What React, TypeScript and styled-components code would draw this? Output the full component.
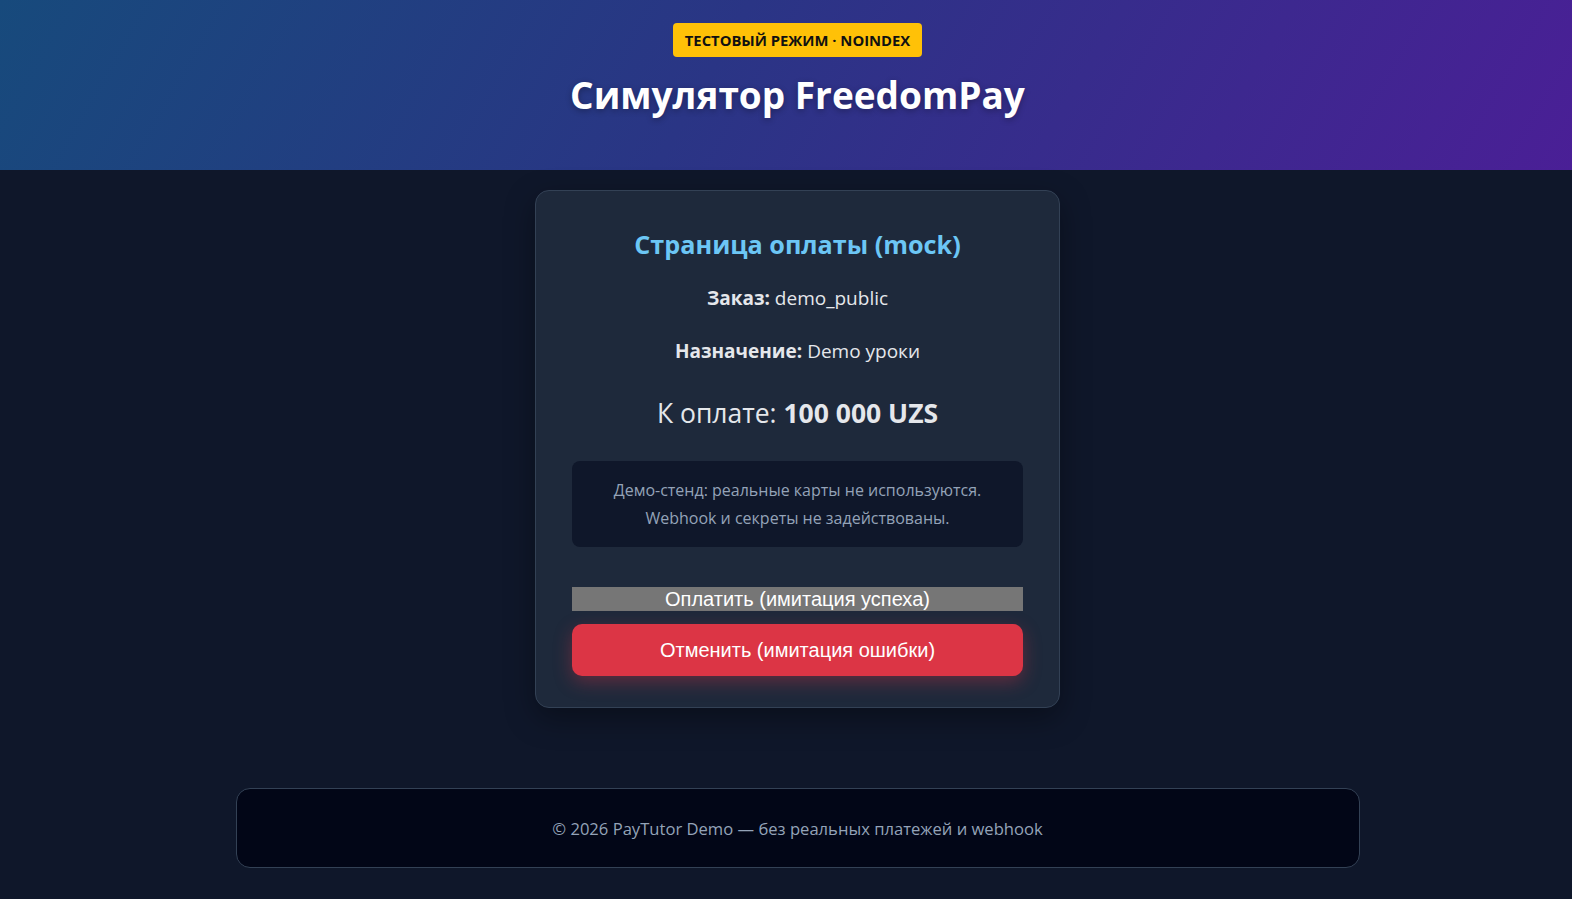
import { createGlobalStyle, styled } from 'styled-components';

const GlobalStyle = createGlobalStyle`
  html, body {
    margin: 0;
    padding: 0;
    background: #0f172a;
  }

  body {
    font-family: 'Open Sans', 'Noto Sans', sans-serif;
    color: #e2e8f0;
  }
`;

const order = {
  id: 'demo_public',
  purpose: 'Demo уроки',
  amount: '100 000 UZS',
};

const App = () => {
  return (
    <>
      <GlobalStyle />
      <PageS>
        <HeaderS>
          <BadgeS>ТЕСТОВЫЙ РЕЖИМ · NOINDEX</BadgeS>
          <TitleS>Симулятор FreedomPay</TitleS>
        </HeaderS>
        <ContentS>
          <CardS>
            <CardTitleS>Страница оплаты (mock)</CardTitleS>
            <InfoLineS>
              <strong>Заказ:</strong> {order.id}
            </InfoLineS>
            <InfoLineS>
              <strong>Назначение:</strong> {order.purpose}
            </InfoLineS>
            <AmountS>
              К оплате: <strong>{order.amount}</strong>
            </AmountS>
            <NoticeS>
              Демо-стенд: реальные карты не используются.
              <br />
              Webhook и секреты не задействованы.
            </NoticeS>
            <ActionsS>
              <PayButtonS type='button'>Оплатить (имитация успеха)</PayButtonS>
              <CancelButtonS type='button'>Отменить (имитация ошибки)</CancelButtonS>
            </ActionsS>
          </CardS>
          <FooterS>© 2026 PayTutor Demo — без реальных платежей и webhook</FooterS>
        </ContentS>
      </PageS>
    </>
  );
};

export default App;

const PageS = styled.div`
  min-height: 899px;
  display: flex;
  flex-direction: column;
`;

const HeaderS = styled.header`
  box-sizing: border-box;
  width: 100%;
  height: 170px;
  padding: 23px 0 0 23px;
  display: flex;
  flex-direction: column;
  align-items: center;
  background: linear-gradient(120deg, #174a7c 0%, #2a3585 45%, #4a1f96 100%);
`;

const BadgeS = styled.div`
  box-sizing: border-box;
  height: 34px;
  padding: 0 12px;
  display: flex;
  align-items: center;
  border-radius: 4px;
  background: #ffc107;
  color: #111;
  font-size: 14.8px;
  font-weight: 700;
`;

const TitleS = styled.h1`
  margin: 12px 0 0;
  color: #fff;
  font-size: 37px;
  font-weight: 700;
  line-height: 52px;
  text-shadow: 0 2px 6px rgba(0, 0, 0, 0.3);
`;

const ContentS = styled.main`
  padding: 20px 0 0 23px;
  display: flex;
  flex-direction: column;
  align-items: center;
`;

const CardS = styled.section`
  box-sizing: border-box;
  width: 525px;
  padding: 28px 36px 31px;
  display: flex;
  flex-direction: column;
  align-items: stretch;
  border: 1px solid #334155;
  border-radius: 14px;
  background: #1e293b;
  box-shadow: 0 10px 30px rgba(0, 0, 0, 0.35);
  text-align: center;
`;

const CardTitleS = styled.h2`
  margin: 0 0 16px;
  color: #6cc6f5;
  font-size: 25.2px;
  font-weight: 700;
  line-height: 50px;
`;

const InfoLineS = styled.p`
  margin: 0 0 26px;
  font-size: 19px;
  line-height: 27px;
  color: #e5e7eb;

  strong {
    font-weight: 700;
  }
`;

const AmountS = styled.div`
  margin: 4px 0 30px;
  font-size: 26.5px;
  line-height: 36px;
  color: #e5e7eb;

  strong {
    font-weight: 700;
  }
`;

const NoticeS = styled.div`
  padding: 15px 12px;
  border-radius: 8px;
  background: #0f172a;
  color: #94a3b8;
  font-size: 16px;
  line-height: 28px;
`;

const ActionsS = styled.div`
  margin-top: 40px;
  display: flex;
  flex-direction: column;
  gap: 13px;
`;

const PayButtonS = styled.button`
  height: 24px;
  padding: 0;
  border: none;
  background: #767676;
  color: #fff;
  font-family: 'Liberation Sans', Arial, sans-serif;
  font-size: 20px;
  line-height: 24px;
  cursor: pointer;
`;

const CancelButtonS = styled.button`
  height: 52px;
  border: none;
  border-radius: 10px;
  background: #dc3545;
  color: #fff;
  font-family: 'Liberation Sans', Arial, sans-serif;
  font-size: 20px;
  box-shadow: 0 6px 18px rgba(220, 53, 69, 0.35);
  cursor: pointer;
`;

const FooterS = styled.footer`
  box-sizing: border-box;
  width: 1124px;
  height: 80px;
  margin-top: 80px;
  display: flex;
  align-items: center;
  justify-content: center;
  border: 1px solid #334155;
  border-radius: 14px;
  background: #020617;
  color: #94a3b8;
  font-size: 16.6px;
`;
